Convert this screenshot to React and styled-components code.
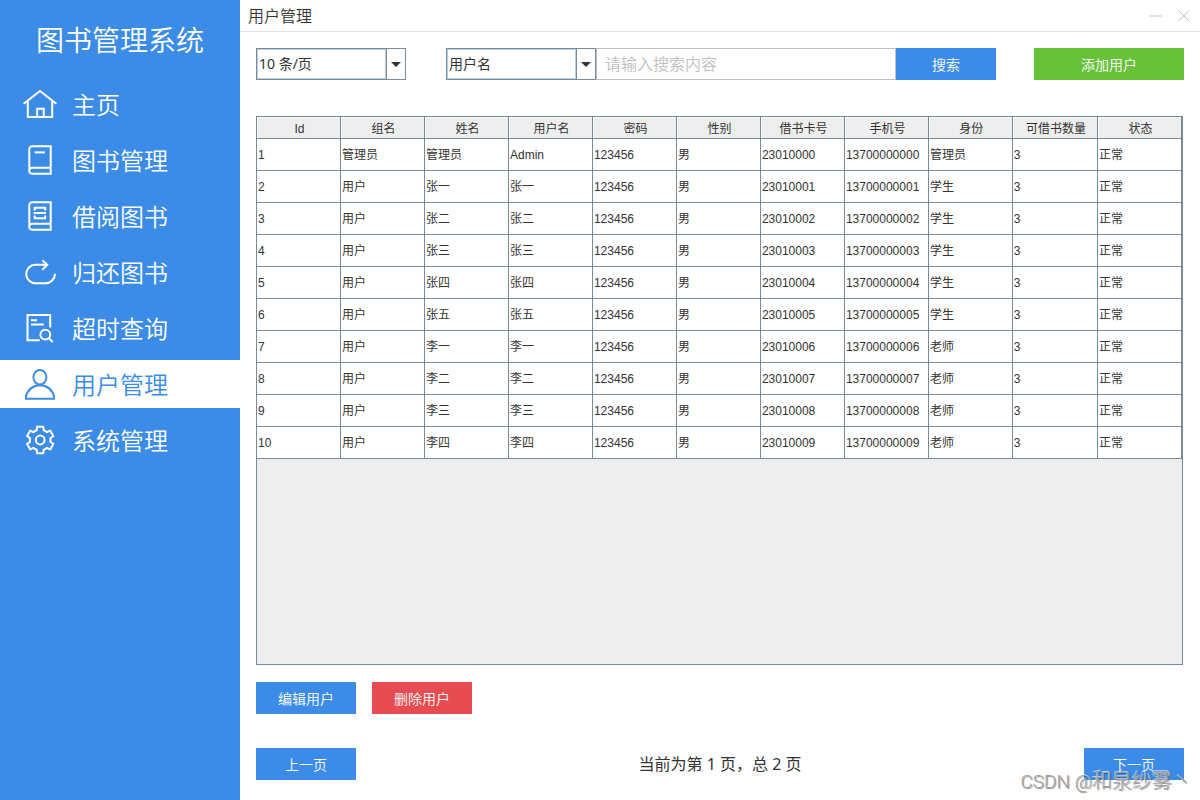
import { useState } from "react";
import styled, { createGlobalStyle } from "styled-components";

const GlobalStyle = createGlobalStyle`
  * {
    box-sizing: border-box;
  }
  body {
    margin: 0;
    background-color: #ffffff;
    color: #333333;
    font-family: "Noto Sans", "Noto Sans CJK SC", sans-serif;
    font-size: 14px;
  }
  button,
  input,
  select {
    margin: 0;
    font-family: inherit;
    border-radius: 0;
  }
`;

const Layout = styled.div`
  display: flex;
  min-height: 100vh;
`;

const Sidebar = styled.aside`
  width: 240px;
  flex-shrink: 0;
  background-color: #3c8ce7;
  color: #ffffff;
`;

const Brand = styled.h1`
  margin: 0;
  height: 80px;
  line-height: 80px;
  text-align: center;
  font-size: 28px;
  font-weight: 350;
`;

const NavList = styled.nav`
  display: flex;
  flex-direction: column;
  gap: 8px;
`;

const NavItem = styled.a`
  display: flex;
  align-items: center;
  gap: 16px;
  height: 48px;
  padding: 0 24px;
  font-size: 24px;
  line-height: 46px;
  font-weight: 350;
  text-decoration: none;
  color: ${(props) => (props.$active ? "#3c8ce7" : "#ffffff")};
  background-color: ${(props) => (props.$active ? "#ffffff" : "transparent")};
  svg {
    flex-shrink: 0;
    overflow: visible;
  }
  span {
    padding-top: 2px;
  }
`;

const Main = styled.main`
  flex: 1;
  min-width: 0;
  display: flex;
  flex-direction: column;
`;

const TitleBar = styled.header`
  display: flex;
  align-items: center;
  justify-content: space-between;
  height: 32px;
  padding: 0 8px;
  border-bottom: 1px solid #dcdfe6;
`;

const PageTitle = styled.h2`
  margin: 0;
  font-size: 16px;
  line-height: 30px;
  font-weight: 350;
`;

const WindowButtons = styled.div`
  display: flex;
  gap: 12px;
`;

const WindowButton = styled.button`
  display: flex;
  width: 16px;
  height: 16px;
  padding: 0;
  border: none;
  background: none;
  cursor: pointer;
`;

const Content = styled.div`
  flex: 1;
  display: flex;
  flex-direction: column;
  padding: 16px 16px 20px;
`;

const Toolbar = styled.div`
  display: flex;
  align-items: center;
  justify-content: space-between;
`;

const Filters = styled.div`
  display: flex;
  gap: 40px;
`;

const SearchForm = styled.form`
  display: flex;
`;

const SelectBox = styled.div`
  display: grid;
  grid-template-columns: 1fr 19px;
  width: 150px;
  height: 32px;
  border: 1px solid #7a8a99;
`;

const Select = styled.select`
  grid-column: 1 / -1;
  grid-row: 1;
  appearance: none;
  padding: 0 20px 2px 2px;
  border: none;
  outline: none;
  color: #333333;
  background-color: #ffffff;
  box-shadow: inset 0 0 0 1px #b8cfe5;
  font-size: 14px;
`;

const SelectArrow = styled.span`
  grid-column: 2;
  grid-row: 1;
  z-index: 1;
  display: flex;
  align-items: center;
  justify-content: center;
  border-left: 1px solid #7a8a99;
  background-color: #ffffff;
  box-shadow: -1px 0 #b8cfe5;
  pointer-events: none;
`;

const SearchInput = styled.input`
  width: 300px;
  height: 32px;
  padding: 0 8px;
  border: 1px solid #c0c0c0;
  outline: none;
  font-size: 16px;
  font-weight: 350;
  &::placeholder {
    color: #c0c0c0;
    opacity: 1;
  }
`;

const colors = {
  primary: "#3c8ce7",
  success: "#67c23a",
  danger: "#e64c52",
};

const Button = styled.button`
  width: ${(props) => (props.$wide ? "150px" : "100px")};
  height: 32px;
  padding: 2px 0 0;
  border: none;
  color: #ffffff;
  background-color: ${(props) => colors[props.$type || "primary"]};
  font-size: 14px;
  line-height: 30px;
  font-weight: 350;
  cursor: pointer;
  &:hover {
    opacity: 0.9;
  }
`;

const TablePanel = styled.div`
  flex: 1;
  margin: 36px 1px 17px 0;
  border: 1px solid #7a8a99;
  background-color: #eeeeee;
`;

const Table = styled.table`
  width: 100%;
  table-layout: fixed;
  border-collapse: separate;
  border-spacing: 0;
  font-family: "Liberation Sans", "Noto Sans CJK SC", sans-serif;
  font-size: 12px;
  line-height: 16px;
`;

const HeadCell = styled.th`
  width: 9.08%;
  height: 22px;
  padding: 2px 0 0 2px;
  border-right: 1px solid #7a8a99;
  border-bottom: 1px solid #7a8a99;
  box-shadow: inset 1px 1px #ffffff;
  font-weight: 400;
  text-align: center;
  &:nth-child(10) {
    width: auto;
  }
`;

const Cell = styled.td`
  height: 32px;
  padding: 0 1px;
  border-right: 1px solid #7a8a99;
  border-bottom: 1px solid #7a8a99;
  background-color: #ffffff;
  white-space: nowrap;
`;

const Actions = styled.div`
  display: flex;
  gap: 16px;
`;

const Pager = styled.div`
  display: flex;
  align-items: center;
  justify-content: space-between;
  margin-top: 34px;
`;

const PageInfo = styled.span`
  font-size: 16px;
  line-height: 32px;
  font-weight: 400;
`;

const Watermark = styled.div`
  position: absolute;
  right: 8px;
  bottom: 3px;
  font-family: Roboto, "Noto Sans CJK SC", sans-serif;
  font-size: 20px;
  line-height: 30px;
  font-weight: 300;
  color: #a0a0a0;
  text-shadow: -1px -1px 0 rgba(255, 255, 255, 0.6), 1px 1px 1px rgba(60, 60, 60, 0.6);
  pointer-events: none;
  span {
    font-size: 19px;
  }
`;

const Screen = styled.div`
  position: relative;
`;

// six teeth around the centre of a 32px box
const tooth = [
  [-5, -9],
  [-3.4, -9.8],
  [-3.2, -13.3],
  [3.2, -13.3],
  [3.4, -9.8],
  [5, -9],
];
const gearPoints = [0, 60, 120, 180, 240, 300]
  .flatMap((deg) => {
    const a = (deg * Math.PI) / 180;
    return tooth.map(([x, y]) => [
      16.2 + x * Math.cos(a) - y * Math.sin(a),
      16 + x * Math.sin(a) + y * Math.cos(a),
    ]);
  })
  .map((point) => point.map((n) => n.toFixed(2)).join(","))
  .join(" ");

const bookPath = "M26.7 2.3H8a2.7 2.7 0 0 0-2.7 2.7V27a2.7 2.7 0 0 0 2.7 2.7H26.7ZM26.7 23.7H8A2.7 2.7 0 0 0 5.3 26.4";

const icons = {
  home: (
    <>
      <path d="M-.3 15.7L16 3 32.3 15.7" />
      <path d="M3.8 13V29H28.2V13" />
      <path d="M13.2 29V20.7H19.7V29" />
    </>
  ),
  book: (
    <>
      <path d={bookPath} />
      <path d="M10.7 8.4H21" />
    </>
  ),
  borrow: (
    <>
      <path d={bookPath} />
      <path d="M10.7 10.4V7.7H21.2V10.4M9.5 13H22M10.7 15.6V18.3H21.2V15.6" />
    </>
  ),
  giveBack: (
    <>
      <path d="M23 8.7H11.5a9.3 9.3 0 0 0 0 18.6H21.5A9.5 9.5 0 0 0 31 17.8" />
      <path d="M18.3 4.2L23.3 8.7 18.3 13.8" />
    </>
  ),
  overdue: (
    <>
      <path d="M26.2 15.5V3H3.5V28.3H15.7" />
      <path d="M7 8.2H13M7 12.6H19.7" />
      <circle cx="21.3" cy="22.6" r="4.9" />
      <path d="M25 26.3L28.6 30" />
    </>
  ),
  user: (
    <>
      <ellipse cx="15.9" cy="9.3" rx="6.5" ry="7.3" />
      <path d="M2 30.8V28.6C3.4 21.8 9.2 17.3 16 17.3S28.6 21.8 30 28.6V30.8Z" />
    </>
  ),
  setting: (
    <>
      <polygon points={gearPoints} strokeLinejoin="round" />
      <circle cx="16.2" cy="16" r="4.4" />
    </>
  ),
};

const menus = [
  { key: "home", label: "主页" },
  { key: "book", label: "图书管理" },
  { key: "borrow", label: "借阅图书" },
  { key: "giveBack", label: "归还图书" },
  { key: "overdue", label: "超时查询" },
  { key: "user", label: "用户管理" },
  { key: "setting", label: "系统管理" },
];

const columns = [
  "Id",
  "组名",
  "姓名",
  "用户名",
  "密码",
  "性别",
  "借书卡号",
  "手机号",
  "身份",
  "可借书数量",
  "状态",
];

const people = [
  ["管理员", "管理员", "Admin", "管理员"],
  ["用户", "张一", "张一", "学生"],
  ["用户", "张二", "张二", "学生"],
  ["用户", "张三", "张三", "学生"],
  ["用户", "张四", "张四", "学生"],
  ["用户", "张五", "张五", "学生"],
  ["用户", "李一", "李一", "老师"],
  ["用户", "李二", "李二", "老师"],
  ["用户", "李三", "李三", "老师"],
  ["用户", "李四", "李四", "老师"],
];

const rows = people.map(([group, name, account, role], i) => [
  i + 1,
  group,
  name,
  account,
  "123456",
  "男",
  23010000 + i,
  13700000000 + i,
  role,
  3,
  "正常",
]);

function Dropdown({ label, options }) {
  return (
    <SelectBox>
      <Select aria-label={label}>
        {options.map((option) => (
          <option key={option}>{option}</option>
        ))}
      </Select>
      <SelectArrow>
        <svg width="10" height="5" viewBox="0 0 10 5">
          <path d="M0 0H10L5 5Z" fill="#333333" />
        </svg>
      </SelectArrow>
    </SelectBox>
  );
}

export default function App() {
  const [active, setActive] = useState("user");
  const [keyword, setKeyword] = useState("");

  return (
    <Screen>
      <GlobalStyle />
      <Layout>
        <Sidebar>
          <Brand>图书管理系统</Brand>
          <NavList>
            {menus.map((menu) => (
              <NavItem
                key={menu.key}
                href={`#${menu.key}`}
                $active={menu.key === active}
                onClick={() => setActive(menu.key)}
              >
                <svg width="32" height="32" viewBox="0 0 32 32" fill="none" stroke="currentColor" strokeWidth="2">
                  {icons[menu.key]}
                </svg>
                <span>{menu.label}</span>
              </NavItem>
            ))}
          </NavList>
        </Sidebar>
        <Main>
          <TitleBar>
            <PageTitle>用户管理</PageTitle>
            <WindowButtons>
              <WindowButton aria-label="最小化">
                <svg width="16" height="16" viewBox="0 0 16 16">
                  <path d="M1 8H14" stroke="#e2e2e2" strokeWidth="2" />
                </svg>
              </WindowButton>
              <WindowButton aria-label="关闭">
                <svg width="16" height="16" viewBox="0 0 16 16">
                  <path d="M2.5 2.5L13 13M13 2.5L2.5 13" stroke="#bdbdbd" />
                </svg>
              </WindowButton>
            </WindowButtons>
          </TitleBar>
          <Content>
            <Toolbar>
              <Filters>
                <Dropdown label="每页条数" options={["10 条/页", "20 条/页", "50 条/页"]} />
                <SearchForm onSubmit={(e) => e.preventDefault()}>
                  <Dropdown label="搜索字段" options={["用户名", "姓名", "手机号"]} />
                  <SearchInput
                    aria-label="搜索内容"
                    placeholder="请输入搜索内容"
                    value={keyword}
                    onChange={(e) => setKeyword(e.target.value)}
                  />
                  <Button type="submit">搜索</Button>
                </SearchForm>
              </Filters>
              <Button $type="success" $wide>
                添加用户
              </Button>
            </Toolbar>
            <TablePanel>
              <Table>
                <thead>
                  <tr>
                    {columns.map((column) => (
                      <HeadCell key={column}>{column}</HeadCell>
                    ))}
                  </tr>
                </thead>
                <tbody>
                  {rows.map((row) => (
                    <tr key={row[0]}>
                      {row.map((value, i) => (
                        <Cell key={columns[i]}>{value}</Cell>
                      ))}
                    </tr>
                  ))}
                </tbody>
              </Table>
            </TablePanel>
            <Actions>
              <Button>编辑用户</Button>
              <Button $type="danger">删除用户</Button>
            </Actions>
            <Pager>
              <Button>上一页</Button>
              <PageInfo>当前为第 1 页，总 2 页</PageInfo>
              <Button>下一页</Button>
            </Pager>
          </Content>
        </Main>
      </Layout>
      <Watermark>
        <span>CSDN @</span>和泉纱雾丶
      </Watermark>
    </Screen>
  );
}
